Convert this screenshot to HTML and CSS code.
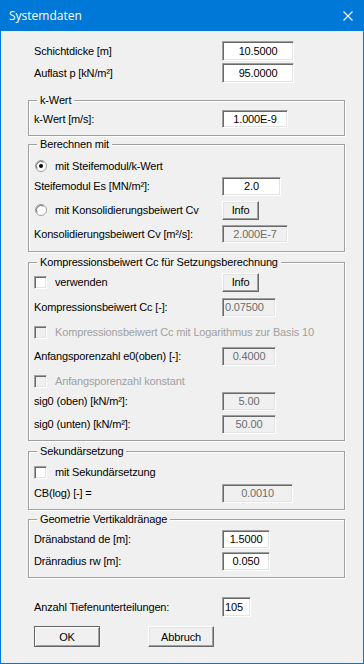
FILE: index.html
```html
<!DOCTYPE html>
<html lang="de">
<head>
<meta charset="utf-8">
<title>Systemdaten</title>
<link rel="stylesheet" href="styles.css">
</head>
<body>
<div class="window">
  <div class="titlebar">
    <span class="title">Systemdaten</span>
    <svg class="close" width="10" height="10" viewBox="0 0 10 10"><path d="M0.5 0.5L9.5 9.5M9.5 0.5L0.5 9.5" stroke="#fff" stroke-width="1.1" fill="none"/></svg>
  </div>
  <div class="content">
    <div class="row top first">
      <span class="label">Schichtdicke [m]</span>
      <span class="field w72 h20">10.5000</span>
    </div>
    <div class="row top mt2">
      <span class="label">Auflast p [kN/m²]</span>
      <span class="field w72 h20">95.0000</span>
    </div>

    <fieldset class="group g-kwert">
      <legend>k-Wert</legend>
      <div class="row mt2">
        <span class="label">k-Wert [m/s]:</span>
        <span class="field w66 h18">1.000E-9</span>
      </div>
    </fieldset>

    <fieldset class="group g-calc">
      <legend>Berechnen mit</legend>
      <div class="row mt5">
        <span class="option">
          <svg class="radio" width="12" height="12" viewBox="0 0 12 12"><circle cx="6" cy="6" r="5.5" fill="#fff" stroke="#a0a0a0"/><path d="M2.2 8.6A4.6 4.6 0 0 1 8.6 2.2" stroke="#696969" fill="none"/><circle cx="6" cy="6" r="2" fill="#000"/></svg>
          <span class="optlabel">mit Steifemodul/k-Wert</span>
        </span>
      </div>
      <div class="row">
        <span class="label">Steifemodul Es [MN/m²]:</span>
        <span class="field w59 h19">2.0</span>
      </div>
      <div class="row mt4">
        <span class="option">
          <svg class="radio" width="12" height="12" viewBox="0 0 12 12"><circle cx="6" cy="6" r="5.5" fill="#fff" stroke="#a0a0a0"/><path d="M2.2 8.6A4.6 4.6 0 0 1 8.6 2.2" stroke="#696969" fill="none"/></svg>
          <span class="optlabel">mit Konsolidierungsbeiwert Cv</span>
        </span>
        <span class="button info">Info</span>
      </div>
      <div class="row mt4">
        <span class="label">Konsolidierungsbeiwert Cv [m²/s]:</span>
        <span class="field disabled w66 h18">2.000E-7</span>
      </div>
    </fieldset>

    <fieldset class="group g-cc">
      <legend>Kompressionsbeiwert Cc für Setzungsberechnung</legend>
      <div class="row mt3">
        <span class="option">
          <span class="check"></span>
          <span class="optlabel">verwenden</span>
        </span>
        <span class="button info">Info</span>
      </div>
      <div class="row mt5">
        <span class="label">Kompressionsbeiwert Cc [-]:</span>
        <span class="field disabled left w54 h19">0.07500</span>
      </div>
      <div class="row mt5">
        <span class="option dim">
          <span class="check off"></span>
          <span class="optlabel">Kompressionsbeiwert Cc mit Logarithmus zur Basis 10</span>
        </span>
      </div>
      <div class="row mt4">
        <span class="label">Anfangsporenzahl e0(oben) [-]:</span>
        <span class="field disabled w54 h19">0.4000</span>
      </div>
      <div class="row mt5">
        <span class="option dim">
          <span class="check off"></span>
          <span class="optlabel">Anfangsporenzahl konstant</span>
        </span>
      </div>
      <div class="row">
        <span class="label">sig0 (oben) [kN/m²]:</span>
        <span class="field disabled w54 h19">5.00</span>
      </div>
      <div class="row mt3">
        <span class="label">sig0 (unten) [kN/m²]:</span>
        <span class="field disabled w54 h19">50.00</span>
      </div>
    </fieldset>

    <fieldset class="group g-sek">
      <legend>Sekundärsetzung</legend>
      <div class="row mt4">
        <span class="option">
          <span class="check"></span>
          <span class="optlabel">mit Sekundärsetzung</span>
        </span>
      </div>
      <div class="row mt1">
        <span class="label">CB(log) [-] =</span>
        <span class="field disabled w71 h19">0.0010</span>
      </div>
    </fieldset>

    <fieldset class="group g-geo">
      <legend>Geometrie Vertikaldränage</legend>
      <div class="row mt3">
        <span class="label">Dränabstand de [m]:</span>
        <span class="field w48 h19">1.5000</span>
      </div>
      <div class="row mt2">
        <span class="label">Dränradius rw [m]:</span>
        <span class="field w48 h19">0.050</span>
      </div>
    </fieldset>

    <div class="row top count">
      <span class="label">Anzahl Tiefenunterteilungen:</span>
      <span class="field left w29 h20">105</span>
    </div>

    <div class="buttons">
      <span class="button dlg default">OK</span>
      <span class="button dlg">Abbruch</span>
    </div>
  </div>
</div>
</body>
</html>
```

FILE: styles.css
```css
* { box-sizing: border-box; }
html, body { margin: 0; padding: 0; }
body {
  width: 364px;
  height: 664px;
  font-family: "Liberation Sans", Arial, sans-serif;
  font-size: 11px;
  letter-spacing: -0.15px;
  color: #000;
  background: #f0f0f0;
}
.window {
  width: 364px;
  height: 664px;
  border: 1px solid #0078d7;
  background: #f0f0f0;
  display: flex;
  flex-direction: column;
}
.titlebar {
  height: 30px;
  flex: 0 0 30px;
  background: #0078d7;
  display: flex;
  align-items: center;
  justify-content: space-between;
  padding: 0 10px 0 8px;
}
.title {
  color: #fff;
  font-family: "Open Sans", "Noto Sans", sans-serif;
  font-size: 12px;
  letter-spacing: 0;
  line-height: 16px;
  margin-top: -1px;
}
.close { display: block; margin-top: -1px; }
.content {
  padding: 10px 18px 0 27px;
  display: flex;
  flex-direction: column;
}
.row {
  display: flex;
  align-items: center;
  height: 20px;
  flex: 0 0 20px;
  line-height: 13px;
  white-space: nowrap;
}
.row.top { padding-left: 6px; }
.label { flex: 0 0 188px; }
.mt1 { margin-top: 1px; }
.mt2 { margin-top: 2px; }
.mt3 { margin-top: 3px; }
.mt4 { margin-top: 4px; }
.mt5 { margin-top: 5px; }

.field {
  display: flex;
  align-items: center;
  justify-content: center;
  background: #fff;
  border: 1px solid;
  border-color: #a0a0a0 #fff #fff #a0a0a0;
  box-shadow: inset 1px 1px 0 #696969, inset -1px -1px 0 #e3e3e3;
  padding: 0 2px;
}
.field.left { justify-content: flex-start; padding-left: 2px; }
.field.disabled {
  background: #f0f0f0;
  color: #6d6d6d;
}
.w29 { width: 29px; }
.w48 { width: 48px; }
.w54 { width: 54px; }
.w59 { width: 59px; }
.w66 { width: 66px; }
.w71 { width: 71px; }
.w72 { width: 72px; }
.h18 { height: 18px; }
.h19 { height: 19px; }
.h20 { height: 20px; }

.group {
  margin: 0;
  padding: 0 4px 6px 5px;
  border: 1px solid #a0a0a0;
  box-shadow: inset 1px 1px 0 #fff, 1px 1px 0 #fff;
  min-width: 0;
  display: flex;
  flex-direction: column;
}
.group legend {
  margin-left: 3px;
  padding: 0 3px;
  line-height: 13px;
  height: 13px;
  background: #f0f0f0;
}
.g-kwert { margin-top: 11px; }
.g-calc { margin-top: 2px; padding-bottom: 7px; }
.g-cc { margin-top: 4px; }
.g-sek { margin-top: 4px; }
.g-geo { margin-top: 3px; }

.option {
  flex: 0 0 188px;
  display: flex;
  align-items: center;
}
.option.dim { flex: 1 1 auto; color: #a0a0a0; }
.radio { display: block; margin-left: 1px; margin-right: 8px; }
.check {
  width: 13px;
  height: 13px;
  margin-right: 8px;
  background: #fff;
  border: 1px solid;
  border-color: #a0a0a0 #fff #fff #a0a0a0;
  box-shadow: inset 1px 1px 0 #696969, inset -1px -1px 0 #e3e3e3;
}
.check.off { background: #f0f0f0; }

.button {
  display: flex;
  align-items: center;
  justify-content: center;
  background: #f0f0f0;
  border: 1px solid;
  border-color: #fff #696969 #696969 #fff;
  box-shadow: inset -1px -1px 0 #a0a0a0, inset 1px 1px 0 #e3e3e3;
}
.button.info { width: 37px; height: 19px; }
.count { margin-top: 19px; }
.buttons {
  display: flex;
  margin-top: 9px;
  padding-left: 6px;
  gap: 48px;
}
.button.dlg { width: 66px; height: 21px; }
.button.default {
  border-color: #646464;
  box-shadow: inset 1px 1px 0 #fff, inset -1px -1px 0 #a0a0a0;
}
```
